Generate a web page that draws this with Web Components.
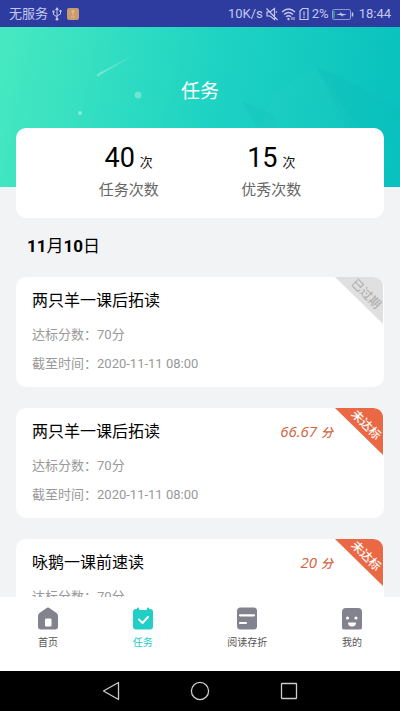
<!DOCTYPE html>
<html lang="zh-CN">
<head>
<meta charset="utf-8">
<meta name="viewport" content="width=device-width, initial-scale=1">
<title>任务</title>
<style>
html, body { margin: 0; height: 100%; }
body { font-family: Roboto, "Noto Sans CJK SC", sans-serif; background: #f1f3f5; color: #0b0b0b; }
</style>
</head>
<body>
<task-app></task-app>
<script>
const define = (name, html, setup) => customElements.define(name, class extends HTMLElement {
  connectedCallback() {
    if (this.shadowRoot) return;
    this.attachShadow({ mode: "open" }).innerHTML = html;
    if (setup) setup(this, this.shadowRoot);
  }
});

define("status-bar", `
<style>
:host { display: flex; flex: none; align-items: center; justify-content: space-between; height: 27px; padding: 0 9px; background: #2e3ca0; color: #c3c9ee; font-size: 13px; line-height: 27px; }
div { display: flex; align-items: center; gap: 4px; }
.right { gap: 2px; }
.time { margin-left: 3px; }
svg { display: block; }
</style>
<div>
  <span>无服务</span>
  <svg width="10" height="14" viewBox="0 0 10 14" fill="none" stroke="#c3c9ee"><path d="M5 2v10M1.500 4.500v3L5 10M8.500 4v3L5 9"/><path d="M5 0l2 3H3zM.5 3.500h2v2h-2zM7.500 3h2v2h-2z" fill="#c3c9ee" stroke="none"/><circle cx="5" cy="12.200" r="1.400" fill="#c3c9ee" stroke="none"/></svg>
  <svg width="14" height="14" viewBox="0 0 14 14"><rect x="1" y="1" width="12" height="12" rx="2" fill="#c69a72"/><path d="M7 3.500v5M5.500 5L7 3.500 8.500 5M5 10h4" stroke="#e8bd7c" fill="none" stroke-width="1.200"/></svg>
</div>
<div class="right">
  <span>10K/s</span>
  <svg width="14" height="14" viewBox="0 0 14 14" fill="none" stroke="#c3c9ee" stroke-width="1.200"><path d="M2 5h3l4.500-3.500v11L5 9H2zM1.500 1.500l11 11.500M11 5.500l1-1"/></svg>
  <svg width="15" height="14" viewBox="0 0 15 14" fill="none" stroke="#c3c9ee" stroke-width="1.400"><path d="M1 5Q7.500-.8 14 5M3 7.500q4.500-4 9 0M5 9.800q2.500-2.200 5 0"/><circle cx="7.500" cy="12" r="1.200" fill="#c3c9ee" stroke="none"/><path d="M11 10v3M13 10v3" stroke-width="1"/></svg>
  <svg width="12" height="14" viewBox="0 0 12 14" fill="none" stroke="#c3c9ee" stroke-width="1.200"><path d="M4.500 1.500H10v11H2V4zM6 4.500v4M6 9.500V11"/></svg>
  <span>2%</span>
  <svg width="23" height="14" viewBox="2 0 23 14" fill="none" stroke="#8f98d2"><rect x="3.500" y="2.500" width="18" height="10" rx="1.500"/><path d="M5 4v7" stroke="#36a894" stroke-width="1.500"/><path d="M23.500 5.500v4" stroke="#c3c9ee" stroke-width="1.500"/><path d="M7 7.500l4.500-1V5l1.500 1.700 5 .8-4.500 1V10L12 8.300z" fill="#c3c9ee" stroke="none"/></svg>
  <span class="time">18:44</span>
</div>`);

define("page-hero", `
<style>
:host { display: grid; grid-template: 160px / 1fr; background: linear-gradient(102deg, #45e8c0 3%, #1ed3c3 52%, #09c1be 96%); color: #fff; }
svg, h1 { grid-area: 1 / 1; }
svg { width: 100%; height: 160px; display: block; }
h1 { margin: 0; padding-top: 51px; font-size: 19px; line-height: 27px; font-weight: 400; text-align: center; }
</style>
<svg viewBox="0 0 400 160" preserveAspectRatio="none" aria-hidden="true">
  <defs>
    <linearGradient id="t"><stop offset="0" stop-color="#fff" stop-opacity=".34"/><stop offset="1" stop-color="#fff" stop-opacity="0"/></linearGradient>
    <linearGradient id="m" x2="1" y2="1"><stop offset="0" stop-color="#057e94" stop-opacity=".08"/><stop offset="1" stop-color="#057e94" stop-opacity="0"/></linearGradient>
  </defs>
  <path d="M97 49q-1-1 2-3l46-24-45 26q-2 2-3 1z" fill="url(#t)"/>
  <circle cx="138" cy="68" r="3.500" fill="#fff" opacity=".3"/>
  <circle cx="80" cy="86" r="2" fill="#fff" opacity=".4"/>
  <path d="M315 39l51 73H254l20-45z" fill="#fff" opacity=".02"/>
  <path d="M242 74l32 14 12 24h-22z" fill="url(#m)"/>
  <path d="M315 39l40 18 45 26v33h-45z" fill="url(#m)"/>
</svg>
<h1><slot></slot></h1>`);

define("stat-panel", `
<style>
:host { display: flex; justify-content: space-evenly; position: relative; margin: -59px 16px 0; padding: 14px 0; background: #fff; border-radius: 10px; }
</style><slot></slot>`);

define("stat-item", `
<style>
:host { display: block; text-align: center; }
.n { display: flex; justify-content: center; align-items: baseline; gap: 5px; height: 32px; font-size: 13px; line-height: 32px; color: #111; }
b { font-size: 27px; line-height: 32px; font-weight: 400; color: #000; }
.l { margin-top: 3px; font-size: 15px; line-height: 27px; color: #666; }
</style>
<div class="n"><b></b><span>次</span></div><div class="l"><slot></slot></div>`,
(el, root) => { root.querySelector("b").textContent = el.getAttribute("value"); });

define("date-title", `
<style>
:host { display: block; padding: 14px 27px 17px; }
h2 { margin: 0; font-size: 17px; line-height: 28px; font-weight: 400; color: #000; }
::slotted(b) { font-weight: 700; }
</style><h2><slot></slot></h2>`);

define("task-card", `
<style>
:host { display: block; position: relative; margin: 0 16px 21px; padding: 9px 16px; background: #fff; border-radius: 10px; overflow: hidden; }
header { display: flex; justify-content: space-between; align-items: center; height: 29px; padding-right: 35px; margin-bottom: 5px; }
h3 { margin: 0; font-size: 16px; line-height: 29px; font-weight: 400; color: #000; }
.score { font: italic 500 15px/29px "Open Sans", "Noto Sans CJK SC", sans-serif; color: #d4623f; }
.score small { font-size: 12px; margin-left: 4px; }
.score:empty { display: none; }
p { margin: 0; font-size: 13px; line-height: 29px; color: #999; }
.tag { position: absolute; top: 0; right: 1px; width: 48px; height: 47px; background: #ea6844; clip-path: polygon(0 0, 100% 0, 100% 100%); border-top-right-radius: 9px; color: #fff; display: grid; place-items: center; }
.tag span { font-size: 12px; line-height: 12px; font-weight: 500; white-space: nowrap; transform: translate(7px, -7px) rotate(45deg); }
:host([expired]) .tag { background: #e0e0e0; color: #aaa; }
:host([expired]) .tag span { font-weight: 400; }
</style>
<header><h3></h3><span class="score"></span></header>
<p>达标分数：<slot name="target"></slot></p>
<p>截至时间：<slot name="due"></slot></p>
<div class="tag"><span></span></div>`,
(el, root) => {
  root.querySelector("h3").textContent = el.getAttribute("heading");
  root.querySelector(".tag span").textContent = el.getAttribute("tag");
  const score = el.getAttribute("score");
  if (score) root.querySelector(".score").innerHTML = score + "<small>分</small>";
});

define("tab-bar", `
<style>
:host { display: block; flex: none; background: #fff; }
nav { display: flex; justify-content: space-between; padding: 9px 38px 20px; }
</style><nav aria-label="主导航"><slot></slot></nav>`);

define("tab-item", `
<style>
:host { display: block; }
a { display: flex; flex-direction: column; align-items: center; gap: 4px; text-decoration: none; font-size: 10px; line-height: 17px; color: #555; white-space: nowrap; }
:host([active]) a { color: #20cdc6; }
::slotted(svg) { display: block; margin: 0 -8px; }
</style><a href="#"><slot name="icon"></slot><span><slot></slot></span></a>`,
(el, root) => { if (el.hasAttribute("active")) root.querySelector("a").setAttribute("aria-current", "page"); });

define("system-nav", `
<style>
:host { display: flex; flex: none; justify-content: center; gap: 61px; align-items: center; height: 40px; background: #000; }
button { display: block; padding: 0; border: 0; background: none; width: 28px; height: 28px; }
svg { display: block; }
</style>
<button aria-label="返回"><svg width="28" height="28" viewBox="0 0 28 28" fill="none" stroke="#ccc" stroke-width="1.300" stroke-linejoin="round"><path d="M21.500 5.500v17L6.500 14z"/></svg></button>
<button aria-label="主页"><svg width="28" height="28" viewBox="0 0 28 28" fill="none" stroke="#ccc" stroke-width="1.300"><circle cx="14" cy="14" r="8.600"/></svg></button>
<button aria-label="最近任务"><svg width="28" height="28" viewBox="0 0 28 28" fill="none" stroke="#ccc" stroke-width="1.300"><rect x="6.500" y="6.500" width="15" height="15" rx=".5"/></svg></button>`);

define("task-app", `
<style>
:host { display: flex; flex-direction: column; height: 100vh; overflow: hidden; }
main { flex: 1; min-height: 0; overflow: hidden; background: #f1f3f5; }
</style>
<status-bar></status-bar>
<main>
  <page-hero>任务</page-hero>
  <stat-panel><stat-item value="40">任务次数</stat-item><stat-item value="15">优秀次数</stat-item></stat-panel>
  <date-title><b>11</b>月<b>10</b>日</date-title>
  <task-card expired heading="两只羊一课后拓读" tag="已过期"><span slot="target">70分</span><time slot="due">2020-11-11 08:00</time></task-card>
  <task-card heading="两只羊一课后拓读" score="66.67" tag="未达标"><span slot="target">70分</span><time slot="due">2020-11-11 08:00</time></task-card>
  <task-card heading="咏鹅一课前速读" score="20" tag="未达标"><span slot="target">70分</span><time slot="due">2020-11-11 08:00</time></task-card>
</main>
<tab-bar>
  <tab-item><svg slot="icon" width="24" height="24" viewBox="0 0 24 24"><path d="M10.300 2.200q1.700-1.300 3.400 0l6.800 4.900q1.500 1.100 1.500 2.800V20.500q0 3-3 3H5q-3 0-3-3V9.900Q2 8.200 3.500 7.100z" fill="#83828f"/><rect x="9" y="12.500" width="6.500" height="8" rx="1.300" fill="#fff"/></svg>首页</tab-item>
  <tab-item active><svg slot="icon" width="24" height="24" viewBox="0 0 24 24"><path d="M5 3h1V2.500q0-1 1-1t1 1Q8 4 9 4h6q1 0 1-1.500 0-1 1-1t1 1V3h1q3 0 3 3v14.500q0 3-3 3H5q-3 0-3-3V6q0-3 3-3z" fill="#22cfc7"/><path d="M8 13.500l3.500 3.500 5.500-6" fill="none" stroke="#fff" stroke-width="1.900" stroke-linecap="round" stroke-linejoin="round"/></svg>任务</tab-item>
  <tab-item><svg slot="icon" width="24" height="24" viewBox="0 0 24 24"><rect x="2" y="1.500" width="20" height="22" rx="3.500" fill="#83828f"/><path d="M5 9.300h14M5 17h6" stroke="#fff" stroke-width="2.200" stroke-linecap="round"/></svg>阅读存折</tab-item>
  <tab-item><svg slot="icon" width="24" height="24" viewBox="0 0 24 24"><path d="M6 2h12q4 0 4 4v14q0 3.500-1.500 3.500h-17Q2 23.500 2 20V6q0-4 4-4z" fill="#83828f"/><circle cx="7.500" cy="12" r="1.600" fill="#fff"/><circle cx="16" cy="12" r="1.600" fill="#fff"/><path d="M8 16.500h8q0 4-4 4t-4-4z" fill="#fff"/></svg>我的</tab-item>
</tab-bar>
<system-nav></system-nav>`);
</script>
</body>
</html>
